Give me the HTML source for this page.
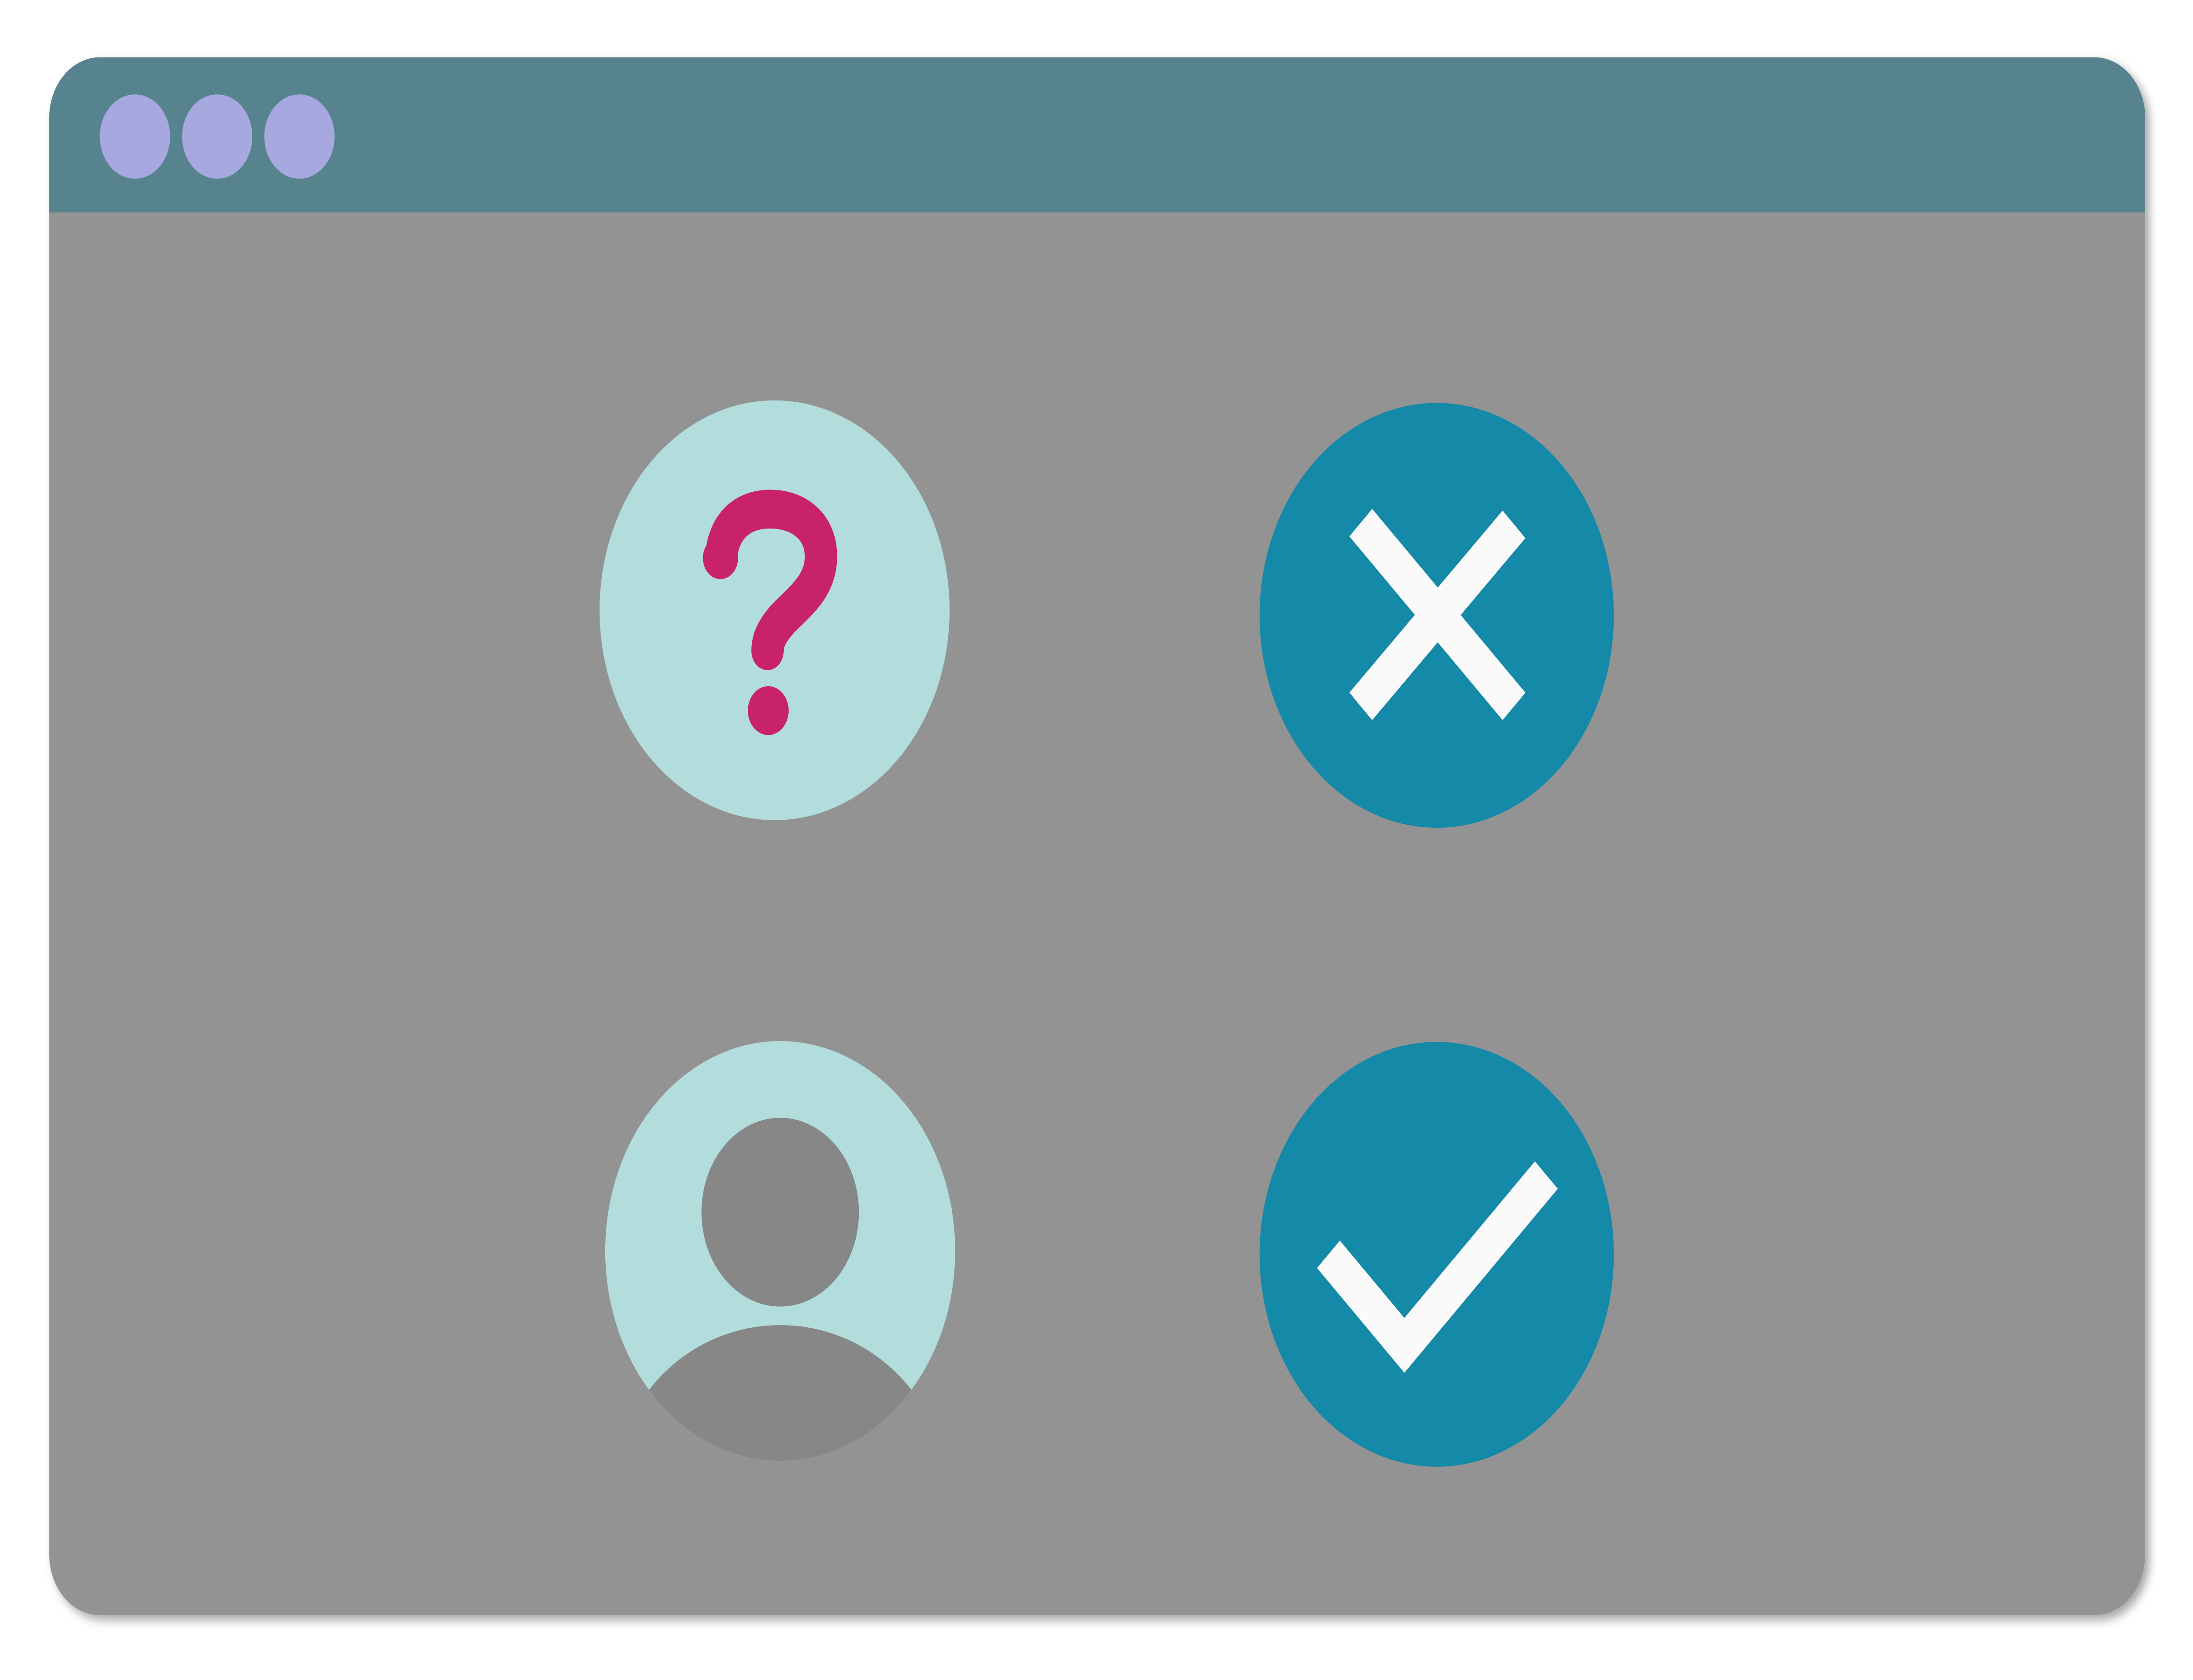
<!DOCTYPE html>
<html><head><meta charset="utf-8"><style>html,body{margin:0;padding:0;background:#fff;overflow:hidden;width:100vw;height:100vh}svg{display:block;width:100vw;height:100vh}</style></head>
<body>
<svg viewBox="0 0 1560 996.5" preserveAspectRatio="none" xmlns="http://www.w3.org/2000/svg">
<defs>
<filter id="sh" x="-5%" y="-5%" width="110%" height="110%"><feDropShadow dx="3" dy="3" stdDeviation="3" flood-color="#000" flood-opacity="0.35"/></filter>
<clipPath id="win"><rect x="35" y="34" width="1491" height="924" rx="36"/></clipPath>
<clipPath id="pc"><circle cx="555" cy="742" r="124.5"/></clipPath>
</defs>
<rect x="35" y="34" width="1491" height="924" rx="36" fill="#939394" filter="url(#sh)"/>
<g clip-path="url(#win)"><rect x="35" y="34" width="1491" height="92" fill="#57838f"/></g>
<circle cx="96" cy="81" r="25" fill="#a8a8e0"/>
<circle cx="154.5" cy="81" r="25" fill="#a8a8e0"/>
<circle cx="213" cy="81" r="25" fill="#a8a8e0"/>
<circle cx="551" cy="362" r="124.5" fill="#b2dddc"/>
<path d="M513,330 C515,312 528,302 548,302 C569,302 584,313 584,330 C584,347 570,356 558,366 C549,374 546,380 546,386" stroke="#c8226a" stroke-width="23" fill="none" stroke-linecap="round" stroke-linejoin="round"/>
<circle cx="512.5" cy="331" r="12.5" fill="#c8226a"/>
<circle cx="546.5" cy="421.5" r="14.5" fill="#c8226a"/>
<circle cx="1022" cy="365" r="126" fill="#1489a8"/>
<g stroke="#fafafa" stroke-width="23" fill="none">
<line x1="968" y1="310" x2="1077" y2="419"/>
<line x1="1077" y1="311" x2="968" y2="419"/>
</g>
<g clip-path="url(#pc)">
<circle cx="555" cy="742" r="124.5" fill="#b2dddc"/>
<ellipse cx="555" cy="885" rx="118" ry="99" fill="#878787"/>
</g>
<circle cx="555" cy="719" r="56" fill="#878787"/>
<circle cx="1022" cy="744" r="126" fill="#1489a8"/>
<polyline points="945,744 999,798 1100,697" stroke="#fafafa" stroke-width="23" fill="none" stroke-linecap="butt"/>
</svg>
</body></html>
